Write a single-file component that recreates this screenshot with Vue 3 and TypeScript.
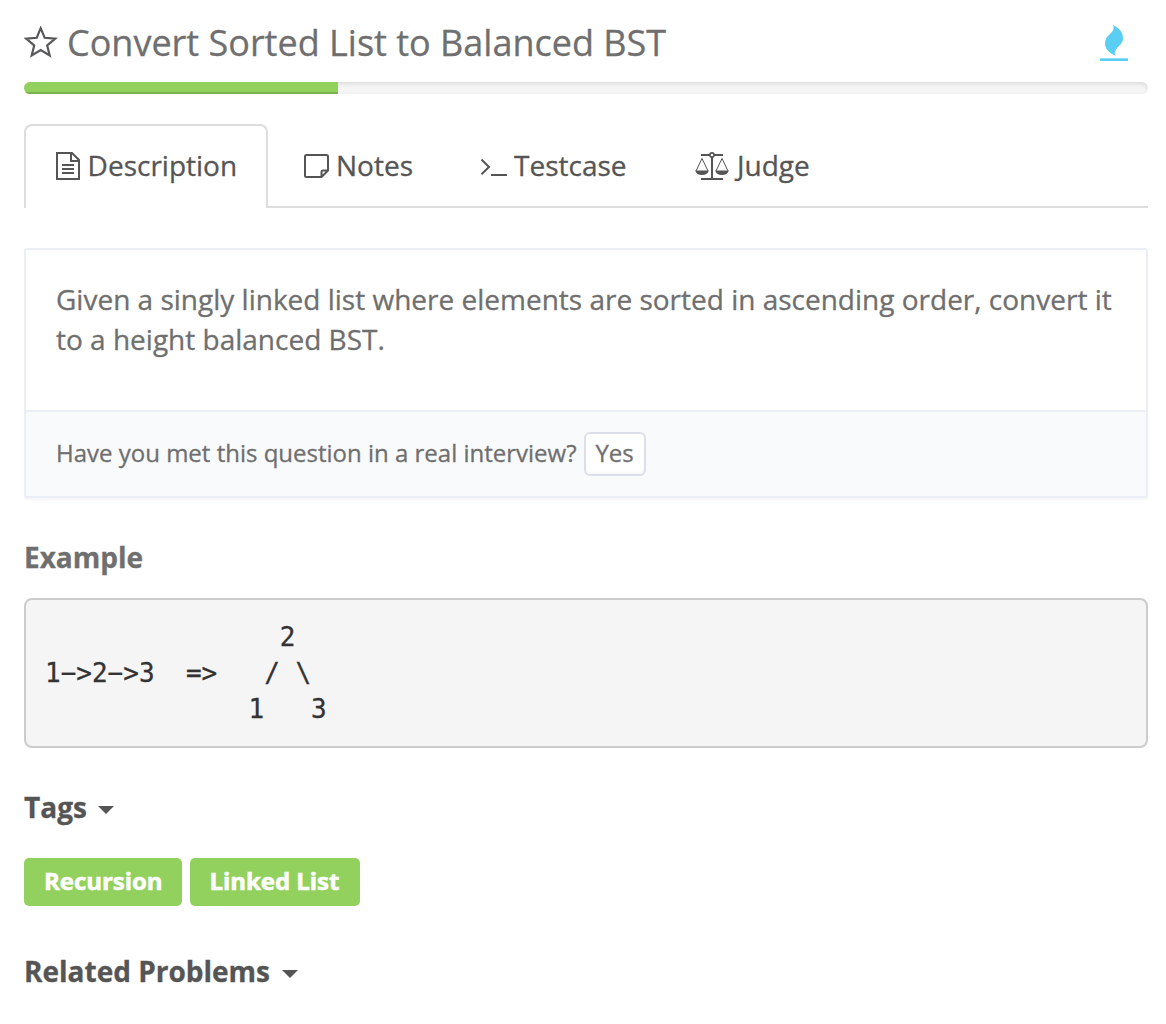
<script setup lang="ts">
import { ref } from 'vue'

type TabId = 'description' | 'notes' | 'testcase' | 'judge'

const tabs: { id: TabId; label: string }[] = [
  { id: 'description', label: 'Description' },
  { id: 'notes', label: 'Notes' },
  { id: 'testcase', label: 'Testcase' },
  { id: 'judge', label: 'Judge' },
]
const active = ref<TabId>('description')
const progress = 27.94
const tags: string[] = ['Recursion', 'Linked List']
const example = [
  '               2',
  '1−>2−>3  =>   / \\',
  '             1   3',
].join('\n')
</script>

<template>
  <main class="page">
    <header class="header">
      <svg class="star" width="34" height="34" viewBox="0 0 34 34">
        <path d="M16.7 2.200 20.7 11.800 31.2 12.600 23.2 19.400 25.7 29.500 16.7 24 7.7 29.500 10.2 19.400 2.2 12.600 12.7 11.800Z" />
      </svg>
      <h1 class="title">Convert Sorted List to Balanced BST</h1>
      <svg class="flame" width="28" height="38" viewBox="0 0 28 38">
        <path d="M13 1C19 4 23 8 23 14C23 18 21 20.500 18 23C15.500 25.500 14 28 15.300 31.700C9 28.500 5 25 5 19.500C5 15 7 12.500 10 10C13 7.500 14.500 5 13 1Z" />
        <rect x="0" y="34.300" width="28" height="2.700" />
      </svg>
    </header>

    <div class="progress"><div class="bar" :style="{ width: progress + '%' }"></div></div>

    <nav class="tabs">
      <button
        v-for="tab in tabs"
        :key="tab.id"
        :class="['tab', tab.id, { active: tab.id === active }]"
        @click="active = tab.id"
      >
        <svg v-if="tab.id === 'description'" width="24" height="28" viewBox="0 0 24 28" class="icon">
          <path d="M1 1H16L23 8V27H1ZM15 1V9H23M6 13H18M6 17H18M6 21H18" />
        </svg>
        <svg v-else-if="tab.id === 'notes'" width="25" height="28" viewBox="0 0 25 28" class="icon">
          <path d="M2.500 3H22.500Q24 3 24 4.500V18.500L17.500 25H2.500Q1 25 1 23.500V4.500Q1 3 2.500 3ZM17.500 25V20Q17.500 18.500 19 18.500H24" />
        </svg>
        <svg v-else-if="tab.id === 'testcase'" width="27" height="28" viewBox="0 0 27 28" class="icon">
          <path d="M1.500 7.500 9 15 1.500 22.300M11 23H27" />
        </svg>
        <svg v-else width="34" height="30" viewBox="0 0 34 30" class="icon">
          <path d="M6 4H28M17 4V28M6 28H28" />
          <circle cx="17" cy="4" r="2.100" class="pivot" />
          <path class="thin" d="M1 20 7 7.500 13 20M21 20 27 7.500 33 20" />
          <path class="pan" d="M.3 19.500H13.700C13.200 22.500 10.500 24 7 24S.8 22.500.3 19.500ZM20.300 19.500H33.700C33.200 22.500 30.500 24 27 24S20.800 22.500 20.300 19.500Z" />
        </svg>
        <span>{{ tab.label }}</span>
      </button>
    </nav>

    <section class="card">
      <p class="statement">Given a singly linked list where elements are sorted in ascending order, convert it<br />to a height balanced BST.</p>
      <div class="question">
        <span>Have you met this question in a real interview?</span>
        <button class="yes">Yes</button>
      </div>
    </section>

    <h2 class="example-title">Example</h2>
    <pre class="example">{{ example }}</pre>

    <h2 class="toggle">Tags<i class="caret"></i></h2>
    <div class="tags">
      <a v-for="tag in tags" :key="tag" class="tag">{{ tag }}</a>
    </div>
    <h2 class="toggle related">Related Problems<i class="caret"></i></h2>
  </main>
</template>

<style>
body {
  margin: 0;
  background: #fff;
}
</style>

<style scoped>
.page {
  box-sizing: border-box;
  height: 1024px;
  padding: 18px 18px 0 24px;
  overflow: hidden;
  font-family: "Open Sans", sans-serif;
  color: #6f6f6f;
  -webkit-text-stroke: 0.3px currentColor;
}
h1, h2, p, pre { margin: 0; }
button { font-family: inherit; cursor: pointer; }
.header {
  display: flex;
  align-items: center;
  height: 50px;
}
.star {
  fill: none;
  stroke: #58585a;
  stroke-width: 2.2;
}
.title {
  margin-left: 9px;
  font-size: 36px;
  font-weight: 400;
  line-height: 50px;
  white-space: nowrap;
}
.flame {
  margin: 0 20px 0 auto;
  fill: #5bcff3;
}
.progress {
  height: 12px;
  margin-top: 14px;
  overflow: hidden;
  border-radius: 6px;
  background: #f5f5f5;
  box-shadow: inset 0 2px 4px rgba(0, 0, 0, 0.1);
}
.bar {
  height: 100%;
  background: #93d15f;
  box-shadow: inset 0 -2px 0 #7db150;
}
.tabs {
  display: flex;
  box-sizing: border-box;
  height: 84px;
  margin-top: 30px;
  border-bottom: 2px solid #ddd;
}
.tab {
  display: flex;
  align-items: center;
  box-sizing: border-box;
  height: 84px;
  padding: 0 30px 2px;
  border: 2px solid transparent;
  border-bottom: 0;
  border-radius: 8px 8px 0 0;
  background: none;
  color: #555;
  font-size: 28px;
  line-height: 40px;
  white-space: nowrap;
}
.tab span {
  margin-left: 7px;
  padding-bottom: 2px;
}
.tab.active {
  width: 244px;
  border-color: #ddd;
  background: #fff;
}
.description span { margin-left: 7.600px; }
.notes { width: 176px; margin-left: 4px; }
.testcase { width: 215px; }
.judge { width: 184px; }
.judge span { margin-left: 8px; }
.icon {
  flex: none;
  fill: none;
  stroke: #555;
  stroke-width: 2;
}
.icon .thin { stroke-width: 1; }
.icon .pan { fill: #555; stroke: none; }
.icon .pivot { fill: #fff; stroke-width: 1.6; }
.card {
  box-sizing: border-box;
  height: 250px;
  margin-top: 40px;
  border: 2px solid #ebeff5;
  border-radius: 3px;
  box-shadow: 0 2px 2px rgba(0, 0, 0, 0.04);
}
.statement {
  box-sizing: border-box;
  height: 160px;
  padding: 29px 30px 0;
  font-size: 28px;
  line-height: 40px;
  white-space: nowrap;
}
.question {
  display: flex;
  align-items: center;
  box-sizing: border-box;
  height: 86px;
  padding: 0 30px;
  border-top: 2px solid #ebeff5;
  background: #f9fafc;
  font-size: 24px;
  white-space: nowrap;
}
.question span { padding-bottom: 4px; }
.yes {
  box-sizing: border-box;
  width: 62px;
  height: 44px;
  margin-left: 7px;
  padding: 0 0 4px;
  border: 2px solid #dcdfea;
  border-radius: 6px;
  background: #fff;
  box-shadow: inset 0 -2px 2px rgba(0, 0, 0, 0.03);
  color: #6f6f6f;
  font-size: 24px;
}
.example-title {
  margin-top: 39px;
  font-size: 28px;
  line-height: 40px;
}
.example {
  box-sizing: border-box;
  height: 150px;
  margin-top: 21px;
  padding: 19px;
  border: 2px solid #ccc;
  border-radius: 8px;
  background: #f5f5f5;
  color: #333;
  font: 26px/36px "DejaVu Sans Mono", monospace;
}
.toggle {
  display: flex;
  align-items: center;
  margin-top: 39px;
  color: #555;
  font-size: 28px;
  line-height: 40px;
}
.caret {
  margin: 6px 0 0 11px;
  border: 8px solid transparent;
  border-top-color: #555;
  border-bottom: 0;
}
.tags {
  display: flex;
  gap: 8px;
  margin-top: 31px;
}
.tag {
  height: 48px;
  padding: 0 19.6px 0 20px;
  border-radius: 5px;
  background: #93d15f;
  color: #fff;
  font-size: 24px;
  font-weight: 700;
  letter-spacing: -0.04px;
  line-height: 46px;
  -webkit-text-stroke-width: 0.6px;
}
.tag + .tag { padding: 0 20.700px 0 19.300px; }
.related { margin-top: 45px; }
.related .caret { margin-left: 12px; }
</style>
